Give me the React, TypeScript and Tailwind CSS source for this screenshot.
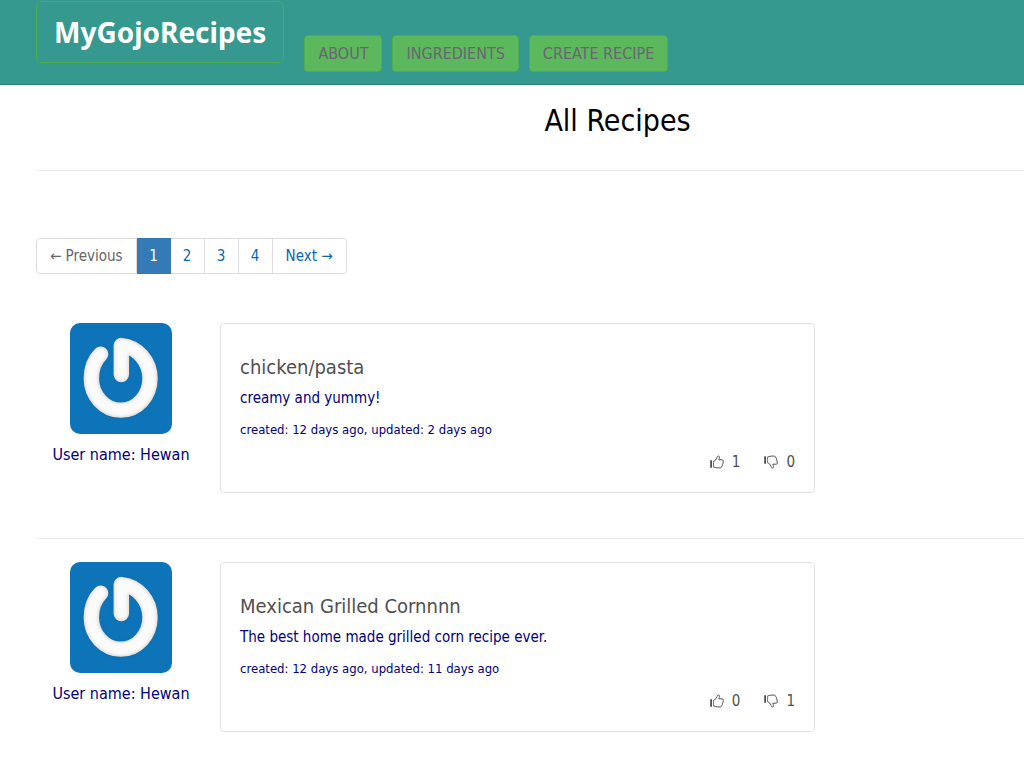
import React from "react";

type Recipe = {
  title: string;
  description: string;
  dates: string;
  user: string;
  likes: number;
  dislikes: number;
};

const recipes: Recipe[] = [
  {
    title: "chicken/pasta",
    description: "creamy and yummy!",
    dates: "created: 12 days ago, updated: 2 days ago",
    user: "Hewan",
    likes: 1,
    dislikes: 0,
  },
  {
    title: "Mexican Grilled Cornnnn",
    description: "The best home made grilled corn recipe ever.",
    dates: "created: 12 days ago, updated: 11 days ago",
    user: "Hewan",
    likes: 0,
    dislikes: 1,
  },
];

const navItems = ["ABOUT", "INGREDIENTS", "CREATE RECIPE"];

function Avatar({ id }: { id: string }) {
  const ring =
    "M46 47 C38 55 32 68 32 84 C32 110 52 132 76 132 C101 132 120 110 120 84 C120 58 101 36 77 34 V78";
  return (
    <svg viewBox="0 0 153 168" preserveAspectRatio="none" className="h-[111px] w-[102px]" role="img" aria-label="User avatar">
      <defs>
        <filter id={id} x="-20%" y="-20%" width="140%" height="140%">
          <feGaussianBlur stdDeviation="2" />
        </filter>
      </defs>
      <rect width="153" height="168" rx="15" fill="#0d74b9" />
      <g fill="none" strokeLinecap="round" strokeLinejoin="round">
        <path d={ring} stroke="#064f86" strokeWidth="23" filter={`url(#${id})`} opacity="0.5" />
        <path d={ring} stroke="#e2dfde" strokeWidth="23" />
        <path d={ring} stroke="#fcfbfb" strokeWidth="18" filter={`url(#${id})`} />
      </g>
    </svg>
  );
}

function ThumbIcon({ down = false }: { down?: boolean }) {
  return (
    <svg viewBox="0 0 14 14" className="size-[14px]" fill="none" stroke="#4f4f4f" aria-hidden="true">
      <g transform={down ? "translate(0 14) scale(1 -1)" : undefined}>
        <path d="M1.1 5.2V12.8" strokeWidth="1.8" />
        <path
          d="M3.7 6.2 C5.4 5.5 6.4 4.4 6.9 2.7 C7.2 1.4 8 .7 8.9 1.1 C9.9 1.6 9.4 3.3 8.8 4.8 H12 C13.4 4.8 13.6 6.1 13 7 C13.3 7.8 13.1 8.7 12.5 9.2 C12.7 10 12.4 10.8 11.8 11.2 C11.8 12.4 11 12.9 9.8 12.9 H7.2 C5.7 12.9 4.9 12.2 3.7 12"
          strokeWidth="1"
          strokeLinejoin="round"
        />
        <path d="M3.6 6V12.2" strokeWidth=".8" />
      </g>
    </svg>
  );
}

function RecipeRow({ recipe, index }: { recipe: Recipe; index: number }) {
  return (
    <article className="flex gap-[14px]">
      <div className="flex w-[170px] shrink-0 flex-col items-center">
        <Avatar id={`avatar-${index}`} />
        <p className="mt-[9px] text-base leading-6 text-[#000080]">User name: {recipe.user}</p>
      </div>
      <div className="max-w-[595px] flex-1 rounded border border-[#e3e3e3] px-[19px] pt-[29px] pb-[18px]">
        <h2 className="text-xl leading-7 text-[#4f4f4f]">{recipe.title}</h2>
        <p className="mt-[5px] text-[15px] leading-6 text-[#000080]">{recipe.description}</p>
        <p className="mt-2 text-[13px] leading-6 text-[#000080]">{recipe.dates}</p>
        <div className="mt-2 flex justify-end gap-6 text-[15px] leading-6 text-[#4f4f4f]">
          <button type="button" aria-label="Like" className="flex items-center gap-2">
            <ThumbIcon />
            {recipe.likes}
          </button>
          <button type="button" aria-label="Dislike" className="flex items-center gap-2">
            <ThumbIcon down />
            {recipe.dislikes}
          </button>
        </div>
      </div>
    </article>
  );
}

export default function App() {
  return (
    <div className="min-h-screen overflow-hidden bg-white font-['DejaVu_Sans_Condensed','DejaVu_Sans',sans-serif]">
      <header className="flex h-[85px] items-start border-b border-[#24837b] bg-[#35998f] pt-px pl-9">
        <a
          href="#"
          className="flex h-[62px] items-center rounded-md border border-[#4cae4c] px-[17px] font-['Noto_Sans','DejaVu_Sans',sans-serif] text-[28px] font-bold text-white"
        >
          MyGojoRecipes
        </a>
        <nav className="mt-[34px] ml-5 flex gap-[10px]">
          {navItems.map((item) => (
            <a
              key={item}
              href="#"
              className="flex h-[37px] items-center rounded border border-[#4cae4c] bg-[#5cb85c] px-[13px] text-base text-[#6b6570]"
            >
              {item}
            </a>
          ))}
        </nav>
      </header>

      <main className="pl-9">
        <h1 className="pt-4 pl-[175px] text-center text-[30px] leading-10 text-black">All Recipes</h1>
        <hr className="mt-[29px] border-[#eeeeee]" />

        <nav aria-label="Pagination" className="mt-[67px] flex text-[15px]">
          <span className="flex h-9 items-center rounded-l border border-[#dddddd] px-[13px] text-[#666666]">← Previous</span>
          <a href="#" aria-current="page" className="flex h-9 w-[34px] items-center justify-center bg-[#337ab7] text-white">
            1
          </a>
          {["2", "3", "4"].map((page) => (
            <a
              key={page}
              href="#"
              className="flex h-9 w-[34px] items-center justify-center border-y border-r border-[#dddddd] text-[#0b67b2]"
            >
              {page}
            </a>
          ))}
          <a href="#" className="flex h-9 items-center rounded-r border-y border-r border-[#dddddd] px-[13px] text-[#0b67b2]">
            Next →
          </a>
        </nav>

        <section aria-label="Recipes" className="mt-[49px]">
          {recipes.map((recipe, index) => (
            <React.Fragment key={recipe.title}>
              {index > 0 && <hr className="mt-[45px] mb-[23px] border-[#eeeeee]" />}
              <RecipeRow recipe={recipe} index={index} />
            </React.Fragment>
          ))}
        </section>
      </main>
    </div>
  );
}
